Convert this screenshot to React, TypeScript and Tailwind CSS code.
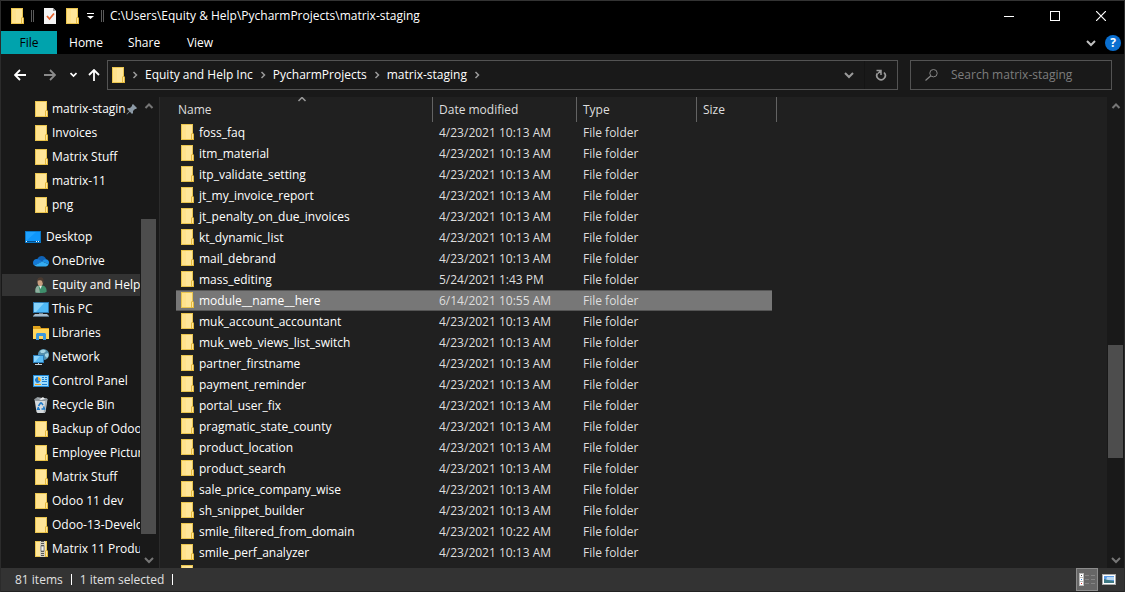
import React from 'react';
import clsx from 'clsx';

type IconProps = { className?: string };

// ---------- icons ----------

const FolderIcon: React.FC<IconProps> = ({ className }) => (
  <svg className={clsx('h-4 w-[13px] shrink-0', className)} viewBox="0 0 13 16" aria-hidden="true">
    <rect x="0" y="0" width="12" height="16" fill="#eac54f" />
    <rect x="1" y="1" width="10" height="14" fill="#ffe69a" />
    <rect x="1" y="1" width="4" height="14" fill="#ffe084" opacity=".6" />
    <path d="M10 16v-6l1-1h1l1 1v6z" fill="#e5b93c" />
    <path d="M11 15v-5h1v5z" fill="#ffe69a" />
  </svg>
);

const ZipIcon = () => (
  <svg className="h-4 w-[13px] shrink-0" viewBox="0 0 13 16" aria-hidden="true">
    <rect width="12" height="16" fill="#eac54f" />
    <rect x="1" y="1" width="10" height="14" fill="#ffe69a" />
    <path d="M10 16v-6l1-1h1l1 1v6z" fill="#e5b93c" />
    <path d="M11 15v-5h1v5z" fill="#ffe69a" />
    <rect x="5" y="0" width="5" height="16" fill="#d7d2c0" />
    <path d="M7.500 0v16" stroke="#555" strokeWidth="3" strokeDasharray="1 1" />
    <rect x="6" y="5" width="3" height="5" fill="#eee" stroke="#666" strokeWidth=".7" />
  </svg>
);

const DesktopIcon = () => (
  <svg className="h-4 w-4 shrink-0" viewBox="0 0 16 16" aria-hidden="true">
    <rect y="2" width="16" height="12" fill="#0a78c8" />
    <rect x="1" y="3" width="14" height="9" fill="#1fa2ff" />
    <path d="M1 12L11 3h4v9z" fill="#0f96fa" />
    <rect x="1" y="12" width="14" height="1" fill="#064f8a" />
    <path d="M1 12h1v1H1zM11 12h1v1h-1zM13 12h1v1h-1z" fill="#fff" />
  </svg>
);

const OneDriveIcon = () => (
  <svg className="h-4 w-4 shrink-0" viewBox="0 0 16 16" aria-hidden="true">
    <path d="M4 6.500C5 4 7 3 8.800 3c2.200 0 3.800 1.400 4.300 3.300L9 9z" fill="#0f62b5" />
    <path d="M3.800 6.100c-2.200 0-3.800 1.600-3.800 3.600 0 1.200.5 2.200 1.300 2.900L9.500 8.700 6.300 6.800c-.7-.5-1.600-.7-2.500-.7z" fill="#1478d4" />
    <path d="M12.800 6.300c1.800 0 3.200 1.500 3.200 3.300 0 .6-.2 1.200-.5 1.700L9.300 8.600c1-1.500 2-2.300 3.500-2.300z" fill="#1c8fe6" />
    <path d="M9.300 8.600L1.300 12.600c.6.500 1.400.8 2.400.8h9.100c1.200 0 2.200-.8 2.700-2.100z" fill="#33acf2" />
  </svg>
);

const UserIcon = () => (
  <svg className="h-4 w-4 shrink-0" viewBox="0 0 16 16" aria-hidden="true">
    <path d="M2.500 15.500c-.5-4 .5-6.500 3-7h4c3 .5 4.500 3 4 6.500-2 1.200-8 1.400-11 .5z" fill="#3f8f6c" />
    <path d="M2.500 15.500c-.5-4 .5-6.500 3-7L7 15.800z" fill="#8fae9f" />
    <path d="M6 8.500l1.500 3.500L9 8.500z" fill="#eee" />
    <ellipse cx="7.300" cy="5" rx="2.800" ry="4" fill="#c99f80" />
    <path d="M4.300 4.500C4 1.500 5.500.2 7.500.2c2.200 0 3.600 1.700 3 5.300-.4 1.300-.8 1.500-1 .3-.3-1.800-1-2.400-2-2.500-1.500 0-2.500 0-3.200 1.200z" fill="#4a3a30" />
  </svg>
);

const PcIcon = () => (
  <svg className="h-4 w-4 shrink-0" viewBox="0 0 16 16" aria-hidden="true">
    <rect y="1" width="16" height="11" fill="#2b78b0" />
    <rect x="1" y="2" width="14" height="9" fill="#4fb9f7" />
    <path d="M1 2h10L3 11H1z" fill="#86d3fc" />
    <path d="M6 12h4v1H6z" fill="#70808c" />
    <path d="M2 13h12l2 2H0z" fill="#a9bccb" />
    <path d="M0 15h16v1H0z" fill="#5d7588" />
  </svg>
);

const LibrariesIcon = () => (
  <svg className="h-4 w-4 shrink-0" viewBox="0 0 16 16" aria-hidden="true">
    <path d="M0 1h7l1 2h8v11H0z" fill="#e0a21c" />
    <path d="M0 4h16v10H0z" fill="#ffd65c" />
    <path d="M3 15V9l1-1h8l1 1v6h-3v-4H6v4z" fill="#3c97dc" />
  </svg>
);

const NetworkIcon = () => (
  <svg className="h-4 w-4 shrink-0" viewBox="0 0 16 16" aria-hidden="true">
    <circle cx="10.500" cy="5.500" r="5.500" fill="#5590ad" />
    <path d="M7 2c2-2 5-1.500 6 0l-2 2H8zM12 5l3-1c1 2 .5 4-1 5l-2-2z" fill="#a5d3e3" />
    <rect y="6" width="11" height="8" fill="#2b7dba" />
    <rect x="1" y="7" width="9" height="6" fill="#5abdf7" />
    <path d="M1 7h6l-5 6H1z" fill="#8bd5fd" />
    <path d="M5 14h1v1h3v1H2v-1h3z" fill="#c5d2da" />
  </svg>
);

const ControlPanelIcon = () => (
  <svg className="h-4 w-4 shrink-0" viewBox="0 0 16 16" aria-hidden="true">
    <rect y="2" width="16" height="12" fill="#228ad6" />
    <rect x="1" y="3" width="14" height="10" fill="#9fdcfb" />
    <circle cx="5" cy="7" r="3" fill="#fff" />
    <path d="M5 7V4a3 3 0 1 0 2.500 4.600z" fill="#1c7fd0" />
    <path d="M5 7V4a3 3 0 0 1 2.500 4.600z" fill="#f3a21c" />
    <path d="M9 4.500h2M12 4.500h2M9 6.500h2M12 6.500h2M9 8.500h5" stroke="#1c7fd0" />
    <path d="M2 11.500h6" stroke="#f3a21c" />
    <path d="M9 11.500h5" stroke="#1c7fd0" />
  </svg>
);

const RecycleIcon = () => (
  <svg className="h-4 w-4 shrink-0" viewBox="0 0 16 16" aria-hidden="true">
    <path d="M1.500 2h13l-2 13-1 1h-7l-1-1z" fill="#d5dadd" />
    <path d="M1.500 2l3-2 5 1h4l1 1-1 2h-11z" fill="#8f979c" />
    <path d="M4 1l3 1 3-2 2 2-4 1z" fill="#f1f3f4" />
    <path d="M12.500 3H14l-2 12-1.500 1z" fill="#a3abb0" />
    <path d="M5.500 9L7.500 6h1l1.500 2.200M10.500 9.500l1 2.500h-3M7 12.200H4.700L5.500 10" fill="none" stroke="#1b78c8" strokeWidth="1.500" />
  </svg>
);

const PinIcon = () => (
  <svg className="h-3 w-3 shrink-0" viewBox="0 0 12 12" aria-hidden="true">
    <path d="M7 1l4 4-1 1H9L7 8v2L6 11 3.800 8.700 1 11.500.5 11l2.800-2.800L1 6l1-1h2l2-2V2z" fill="#8c9aa6" />
  </svg>
);

const Chevron: React.FC<IconProps & { dir: 'up' | 'down' | 'right'; thick?: boolean }> = ({ dir, thick, className }) => {
  const paths = {
    up: 'M1.500 7L5 3.500 8.500 7',
    down: 'M1 3l4 4 4-4',
    right: 'M3.500 2L6.500 5l-3 3',
  };
  return (
    <svg className={clsx('h-[10px] w-[10px] shrink-0', className)} viewBox="0 0 10 10" aria-hidden="true">
      <path d={paths[dir]} fill="none" stroke="currentColor" strokeWidth={thick ? 2 : 1.500} />
    </svg>
  );
};

// ---------- data ----------

const quickAccess = ['matrix-stagin', 'Invoices', 'Matrix Stuff', 'matrix-11', 'png'];

const desktopItems = [
  { label: 'OneDrive', icon: <OneDriveIcon /> },
  { label: 'Equity and Help', icon: <UserIcon />, active: true },
  { label: 'This PC', icon: <PcIcon /> },
  { label: 'Libraries', icon: <LibrariesIcon /> },
  { label: 'Network', icon: <NetworkIcon /> },
  { label: 'Control Panel', icon: <ControlPanelIcon /> },
  { label: 'Recycle Bin', icon: <RecycleIcon /> },
  { label: 'Backup of Odoo', icon: <FolderIcon /> },
  { label: 'Employee Pictur', icon: <FolderIcon /> },
  { label: 'Matrix Stuff', icon: <FolderIcon /> },
  { label: 'Odoo 11 dev', icon: <FolderIcon /> },
  { label: 'Odoo-13-Develo', icon: <FolderIcon /> },
  { label: 'Matrix 11 Produ', icon: <ZipIcon /> },
];

const defaultDate = '4/23/2021 10:13 AM';

const files: { name: string; date?: string; selected?: boolean }[] = [
  { name: 'foss_faq' },
  { name: 'itm_material' },
  { name: 'itp_validate_setting' },
  { name: 'jt_my_invoice_report' },
  { name: 'jt_penalty_on_due_invoices' },
  { name: 'kt_dynamic_list' },
  { name: 'mail_debrand' },
  { name: 'mass_editing', date: '5/24/2021 1:43 PM' },
  { name: 'module__name__here', date: '6/14/2021 10:55 AM', selected: true },
  { name: 'muk_account_accountant' },
  { name: 'muk_web_views_list_switch' },
  { name: 'partner_firstname' },
  { name: 'payment_reminder' },
  { name: 'portal_user_fix' },
  { name: 'pragmatic_state_county' },
  { name: 'product_location' },
  { name: 'product_search' },
  { name: 'sale_price_company_wise' },
  { name: 'sh_snippet_builder' },
  { name: 'smile_filtered_from_domain', date: '4/23/2021 10:22 AM' },
  { name: 'smile_perf_analyzer' },
];

const crumbs = ['Equity and Help Inc', 'PycharmProjects', 'matrix-staging'];

// ---------- parts ----------

const TitleBar = () => (
  <header className="flex h-[31px] shrink-0 items-center border-t border-[#333] bg-black pl-[10px]">
    <FolderIcon />
    <span className="ml-[7px] h-3 w-[3px] border-x border-[#5a5a5a]" />
    <button aria-label="Properties" className="ml-[10px]">
      <svg className="h-4 w-3" viewBox="0 0 12 16" aria-hidden="true">
        <path d="M0 0h9l3 3v13H0z" fill="#f4f4f4" />
        <path d="M9 0l3 3H9z" fill="#999" />
        <path d="M3 8l2.500 3L10 5.500" fill="none" stroke="#e8622c" strokeWidth="1.700" />
      </svg>
    </button>
    <button aria-label="New folder" className="ml-[10px]"><FolderIcon /></button>
    <button aria-label="Customize Quick Access Toolbar" className="ml-2">
      <svg className="h-[6px] w-[7px]" viewBox="0 0 7 6" aria-hidden="true">
        <path d="M0 0h7v1H0zM0 3h7L3.500 6z" fill="#fff" />
      </svg>
    </button>
    <span className="ml-[7px] h-3 w-[3px] border-x border-[#5a5a5a]" />
    <h1 className="ml-[6px] flex-1 truncate">C:\Users\Equity &amp; Help\PycharmProjects\matrix-staging</h1>
    <div className="flex h-full">
      <button aria-label="Minimize" className="flex w-[46px] items-center justify-center">
        <svg className="h-[10px] w-[10px]" viewBox="0 0 10 10"><path d="M0 5h10v1H0z" fill="#fff" /></svg>
      </button>
      <button aria-label="Maximize" className="flex w-[46px] items-center justify-center">
        <svg className="h-[10px] w-[10px]" viewBox="0 0 10 10"><rect x=".5" y=".5" width="9" height="9" fill="none" stroke="#fff" /></svg>
      </button>
      <button aria-label="Close" className="flex w-[46px] items-center justify-center">
        <svg className="h-[10px] w-[10px]" viewBox="0 0 10 10"><path d="M0 0l10 10M10 0L0 10" stroke="#fff" strokeWidth="1.200" /></svg>
      </button>
    </div>
  </header>
);

const RibbonTabs = () => (
  <nav className="flex h-[23px] shrink-0 items-center bg-black pr-[3px]">
    <button className="h-full w-14 bg-[#00a3ad] text-black">File</button>
    <button className="w-[58px]">Home</button>
    <button className="w-[58px]">Share</button>
    <button className="w-[54px]">View</button>
    <button aria-label="Expand the Ribbon" className="ml-auto text-[#c0c0c0]"><Chevron dir="down" thick /></button>
    <button aria-label="Help" className="ml-[9px] flex h-4 w-4 items-center justify-center rounded-full bg-[#0a6fd0] font-bold">?</button>
  </nav>
);

const AddressBar = () => (
  <div className="flex h-[43px] shrink-0 items-center bg-[#191919] pb-px pr-3">
    <div className="flex w-[106px] items-center pl-[13px]">
      <button aria-label="Back">
        <svg className="h-3 w-3" viewBox="0 0 12 12"><path d="M6 1L1 6l5 5M1 6h11" fill="none" stroke="#fff" strokeWidth="1.800" /></svg>
      </button>
      <button aria-label="Forward" className="ml-[18px]">
        <svg className="h-3 w-3" viewBox="0 0 12 12"><path d="M6 1l5 5-5 5M11 6H0" fill="none" stroke="#8a8a8a" strokeWidth="1.800" /></svg>
      </button>
      <button aria-label="Recent locations" className="ml-[14px]">
        <svg className="h-[6px] w-[7px]" viewBox="0 0 7 6"><path d="M.5 1l3 3 3-3" fill="none" stroke="#fff" strokeWidth="1.700" /></svg>
      </button>
      <button aria-label="Up" className="ml-[11px]">
        <svg className="h-3 w-3" viewBox="0 0 12 12"><path d="M1 6l5-5 5 5M6 1v11" fill="none" stroke="#fff" strokeWidth="1.800" /></svg>
      </button>
    </div>
    <div className="flex h-[30px] flex-1 items-center border border-[#535353] pl-1">
      <FolderIcon />
      {crumbs.map((c) => (
        <React.Fragment key={c}>
          <Chevron dir="right" className="mx-[5px] text-[#9a9a9a]" />
          <button className="whitespace-nowrap">{c}</button>
        </React.Fragment>
      ))}
      <Chevron dir="right" className="mx-[5px] text-[#9a9a9a]" />
      <button aria-label="Previous locations" className="ml-auto mr-[10px] text-[#9a9a9a]"><Chevron dir="down" thick /></button>
      <button aria-label="Refresh" className="flex h-full w-[33px] items-center justify-center border-l border-[#141414]">
        <svg className="h-3 w-3" viewBox="0 0 12 12">
          <path d="M9 3.500a4.200 4.200 0 1 1-6.500.7" fill="none" stroke="#9a9a9a" strokeWidth="1.700" />
          <path d="M1.500 1.500h4.500v4.500M6 1.500L3 4.500" fill="none" stroke="#9a9a9a" strokeWidth="1.500" />
        </svg>
      </button>
    </div>
    <label className="ml-3 flex h-[30px] w-[202px] items-center border border-[#535353] pl-[14px]">
      <svg className="h-3 w-[13px] shrink-0" viewBox="0 0 13 12">
        <circle cx="8.500" cy="4.200" r="3.700" fill="none" stroke="#858585" />
        <path d="M5.800 6.800L.5 11.500" stroke="#858585" strokeWidth="1.200" />
      </svg>
      <input
        aria-label="Search matrix-staging"
        placeholder="Search matrix-staging"
        className="ml-[13px] w-full min-w-0 bg-transparent outline-none placeholder:text-[#7d7d7d]"
      />
    </label>
  </div>
);

const Sidebar = () => (
  <aside className="flex w-[159px] shrink-0 border-r border-[#2b2b2b] bg-[#191919]">
    <div className="min-w-0 flex-1 overflow-hidden">
      <ul className="mb-2">
        {quickAccess.map((label, i) => (
          <li key={label}>
            <a href="#" className="flex h-6 items-center pl-[34px]">
              <FolderIcon />
              <span className="ml-1 whitespace-nowrap">{label}</span>
              {i === 0 && <PinIcon />}
            </a>
          </li>
        ))}
      </ul>
      <a href="#" className="flex h-6 items-center pl-6">
        <DesktopIcon />
        <span className="ml-[5px]">Desktop</span>
      </a>
      <ul>
        {desktopItems.map((item) => (
          <li key={item.label} className="py-px pl-px">
            <a href="#" className={clsx('flex h-[22px] items-center pl-[31px]', item.active && 'bg-[#333]')}>
              <span className="flex w-4 shrink-0 justify-center">{item.icon}</span>
              <span className="ml-[3px] whitespace-nowrap">{item.label}</span>
            </a>
          </li>
        ))}
      </ul>
    </div>
    <div className="mr-[2px] flex w-[17px] flex-col items-center text-[#767676]">
      <span className="flex h-[17px] items-center"><Chevron dir="up" thick /></span>
      <span className="flex-[105]" />
      <span className="w-[15px] flex-[315] bg-[#4d4d4d]" />
      <span className="flex-[17]" />
      <span className="flex h-[17px] items-center"><Chevron dir="down" thick /></span>
    </div>
  </aside>
);

const headCell = 'h-[25px] border-r border-[#636363] p-0 pl-[6px] text-left font-normal text-[#dedede]';

const FileList = () => (
  <main className="flex min-w-0 flex-1 bg-[#202020]">
    <div className="min-w-0 flex-1 overflow-hidden pl-4">
      <table className="w-[601px] table-fixed border-separate border-spacing-0">
        <colgroup>
          <col className="w-[257px]" />
          <col className="w-[144px]" />
          <col className="w-[120px]" />
          <col className="w-[80px]" />
        </colgroup>
        <thead>
          <tr>
            <th className="relative h-[25px] border-r border-[#636363] p-0 pl-[2px] text-left font-normal text-[#dedede]">
              Name
              <Chevron dir="up" className="absolute left-[121px] top-[-3px] text-[#9a9a9a]" />
            </th>
            <th className={headCell}>Date modified</th>
            <th className={headCell}>Type</th>
            <th className={headCell}>Size</th>
          </tr>
        </thead>
        <tbody>
          {files.map((f) => {
            const cell = clsx(
              'h-[21px] whitespace-nowrap p-0 align-top',
              f.selected ? 'border-y border-[#555] bg-[#777] pt-px' : 'pt-[2px]'
            );
            return (
              <tr key={f.name} className="leading-[18px]">
                <td className={clsx(cell, 'pl-[5px] text-white')}>
                  <span className="flex items-start">
                    <FolderIcon />
                    <span className="ml-[5px]">{f.name}</span>
                  </span>
                </td>
                <td className={clsx(cell, 'pl-[6px] text-[#dedede]')}>{f.date ?? defaultDate}</td>
                <td className={clsx(cell, 'pl-[6px] text-[#dedede]')}>File folder</td>
                <td className="h-[21px] p-0">
                  {f.selected && <div className="mr-[5px] h-[21px] border-y border-[#555] bg-[#777]" />}
                </td>
              </tr>
            );
          })}
          <tr>
            <td className="h-[21px] p-0 pl-[5px] pt-[2px] align-top"><FolderIcon /></td>
          </tr>
        </tbody>
      </table>
    </div>
    <div className="flex w-[17px] flex-col items-center bg-[#191919] text-[#767676]">
      <span className="flex h-[17px] items-center"><Chevron dir="up" thick /></span>
      <span className="flex-[231]" />
      <span className="w-[15px] flex-[113] bg-[#4d4d4d]" />
      <span className="flex-[93]" />
      <span className="flex h-[17px] items-center"><Chevron dir="down" thick /></span>
    </div>
  </main>
);

const StatusBar = () => (
  <footer className="flex h-6 shrink-0 items-center border-b border-[#222] bg-[#333] pl-[14px] pr-2 text-[#e0e0e0]">
    <span>81 items</span>
    <span className="mx-2 h-[11px] w-px bg-white" />
    <span>1 item selected</span>
    <span className="mx-2 h-[11px] w-px bg-white" />
    <button aria-label="Details view" className="ml-auto flex h-full w-[22px] items-center justify-center border border-[#8c8c8c] bg-[#666]">
      <svg className="h-[13px] w-4" viewBox="0 0 16 13">
        <rect width="5" height="13" fill="#bbb" />
        <path d="M1 1h3v3H1zM1 5h3v3H1zM1 9h3v3H1z" fill="#fff" />
        <path d="M2 2h1v1H2z" fill="#444" />
        <path d="M2 6h1v1H2z" fill="#2a7fd0" />
        <path d="M2 10h1v1H2z" fill="#d02a2a" />
        <path d="M6 2h4v1H6zM12 2h4v1h-4zM6 6h4v1H6zM12 6h4v1h-4zM6 10h4v1H6zM12 10h4v1h-4z" fill="#858585" />
      </svg>
    </button>
    <button aria-label="Large icons view" className="ml-1">
      <svg className="h-[11px] w-[14px]" viewBox="0 0 14 11">
        <rect width="14" height="11" fill="#aaa" />
        <rect x="1" y="1" width="12" height="9" fill="#fff" />
        <rect x="2" y="2" width="10" height="7" fill="#5b9be6" />
        <path d="M5 3h7v3H4z" fill="#b9d8f3" />
        <path d="M2 5l4 1 6 1v2H2z" fill="#3f7a84" />
      </svg>
    </button>
  </footer>
);

export default function App() {
  return (
    <div className="flex h-screen flex-col overflow-hidden border-x border-[#2b2b2b] bg-black font-['Open_Sans','Noto_Sans',sans-serif] text-[12px] leading-4 text-white">
      <TitleBar />
      <RibbonTabs />
      <AddressBar />
      <div className="flex min-h-0 flex-1">
        <Sidebar />
        <FileList />
      </div>
      <StatusBar />
    </div>
  );
}
